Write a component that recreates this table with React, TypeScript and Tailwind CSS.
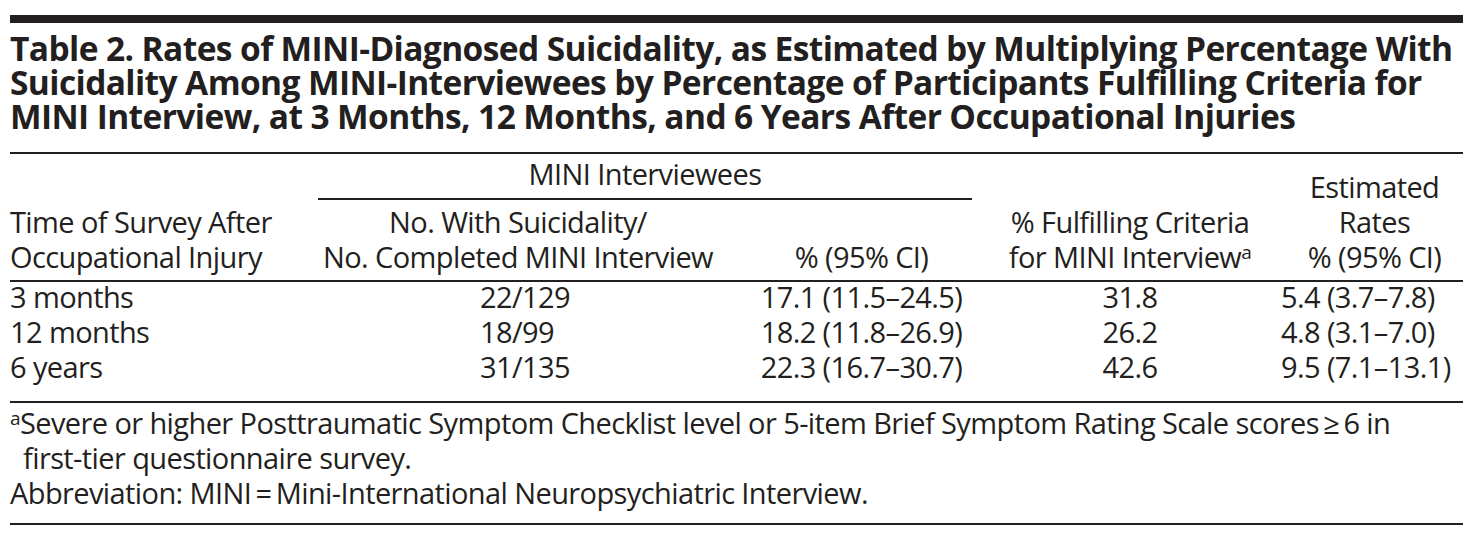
export default function App() {
  const cell = "text-center whitespace-nowrap";
  const cols = "grid grid-cols-[275px_33px_400px_287px_250px_207px]";
  return (
    <div className="w-[1473px] h-[534px] bg-white px-[10px] pt-[15px] font-['Open_Sans',sans-serif] text-[#231f20] text-[29px] leading-[35px] tracking-[-0.6px]">
      <div className="border-t-[8px] border-[#231f20]" />
      <h1 className="text-[33.5px] font-bold leading-[34px] pt-[8px] pb-[19px] border-b-2 border-[#231f20] tracking-[-0.6px]">
        <span className="block whitespace-nowrap">Table 2. Rates of MINI-Diagnosed Suicidality, as Estimated by Multiplying Percentage With</span>
        <span className="block whitespace-nowrap">Suicidality Among MINI-Interviewees by Percentage of Participants Fulfilling Criteria for</span>
        <span className="block whitespace-nowrap">MINI Interview, at 3 Months, 12 Months, and 6 Years After Occupational Injuries</span>
      </h1>

      <div className={`${cols} grid-rows-[46px_80px] border-b-2 border-[#231f20]`}>
        <div className="col-start-1 row-start-1 row-span-2 self-end pb-[6px] whitespace-nowrap">
          <div>Time of Survey After</div>
          <div>Occupational Injury</div>
        </div>
        <div className="col-start-3 col-span-2 row-start-1 mr-[33px] border-b-2 border-[#231f20] text-center pt-[2px]">
          MINI Interviewees
        </div>
        <div className={`col-start-3 row-start-2 self-end pb-[6px] ${cell}`}>
          <div>No. With Suicidality/</div>
          <div>No. Completed MINI Interview</div>
        </div>
        <div className={`col-start-4 row-start-2 self-end pb-[6px] ${cell}`}>% (95% CI)</div>
        <div className={`col-start-5 row-start-1 row-span-2 self-end pb-[6px] ${cell}`}>
          <div>% Fulfilling Criteria</div>
          <div>
            for MINI Interview<sup className="text-[19px]">a</sup>
          </div>
        </div>
        <div className={`col-start-6 row-start-1 row-span-2 self-end pb-[6px] pl-[32px] ${cell}`}>
          <div>Estimated</div>
          <div>Rates</div>
          <div>% (95% CI)</div>
        </div>
      </div>

      <div className={`${cols} -mt-[3px] pb-[17px] border-b-2 border-[#231f20]`}>
        {[
          ["3 months", "22/129", "17.1 (11.5–24.5)", "31.8", "5.4 (3.7–7.8)"],
          ["12 months", "18/99", "18.2 (11.8–26.9)", "26.2", "4.8 (3.1–7.0)"],
          ["6 years", "31/135", "22.3 (16.7–30.7)", "42.6", "9.5 (7.1–13.1)"],
        ].map((r) => (
          <div key={r[0]} className="contents">
            <div className="col-start-1 whitespace-nowrap">{r[0]}</div>
            <div className="col-start-3 pl-[162px] whitespace-nowrap">{r[1]}</div>
            <div className={`col-start-4 ${cell}`}>{r[2]}</div>
            <div className={`col-start-5 ${cell}`}>{r[3]}</div>
            <div className="col-start-6 pl-[26px] whitespace-nowrap">{r[4]}</div>
          </div>
        ))}
      </div>

      <div className="pt-[2px] pb-[13px] border-b-2 border-[#231f20]">
        <p className="pl-[13px] -indent-[13px]">
          <sup className="text-[19px]">a</sup>Severe or higher Posttraumatic Symptom Checklist level or 5-item Brief Symptom Rating Scale scores{"\u2009"}≥{"\u2009"}6 in
          <br />
          first-tier questionnaire survey.
        </p>
        <p>Abbreviation: MINI{"\u2009"}={"\u2009"}Mini-International Neuropsychiatric Interview.</p>
      </div>
    </div>
  );
}
